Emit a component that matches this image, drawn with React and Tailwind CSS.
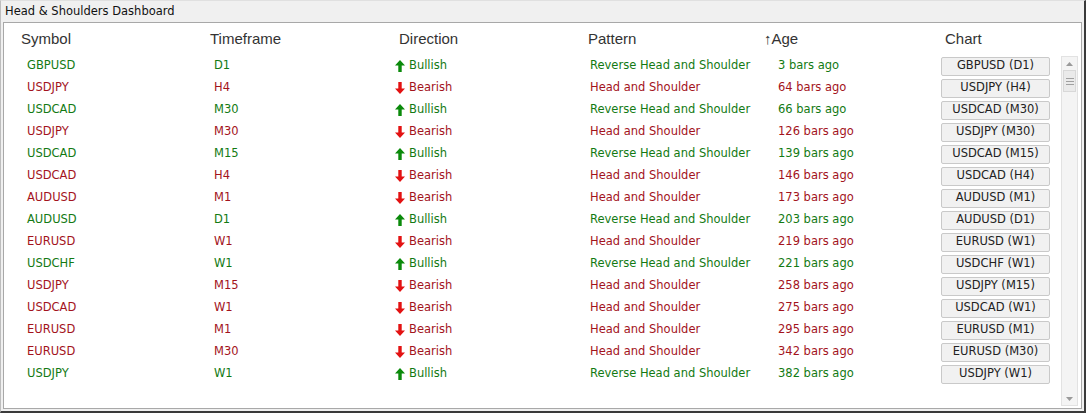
import React from 'react';

const rows = [
  ['GBPUSD', 'D1', 'up', 3],
  ['USDJPY', 'H4', 'down', 64],
  ['USDCAD', 'M30', 'up', 66],
  ['USDJPY', 'M30', 'down', 126],
  ['USDCAD', 'M15', 'up', 139],
  ['USDCAD', 'H4', 'down', 146],
  ['AUDUSD', 'M1', 'down', 173],
  ['AUDUSD', 'D1', 'up', 203],
  ['EURUSD', 'W1', 'down', 219],
  ['USDCHF', 'W1', 'up', 221],
  ['USDJPY', 'M15', 'down', 258],
  ['USDCAD', 'W1', 'down', 275],
  ['EURUSD', 'M1', 'down', 295],
  ['EURUSD', 'M30', 'down', 342],
  ['USDJPY', 'W1', 'up', 382],
];

const Arrow = ({ up }) => (
  <svg width="10" height="12" viewBox="0 0 10 12" className="shrink-0">
    {up ? (
      <path d="M5 0 L10 5.5 L6.7 5.5 L6.7 12 L3.3 12 L3.3 5.5 L0 5.5 Z" fill="#0b8a0b" />
    ) : (
      <path d="M5 12 L10 6.5 L6.7 6.5 L6.7 0 L3.3 0 L3.3 6.5 L0 6.5 Z" fill="#e31212" />
    )}
  </svg>
);

const Row = ({ sym, tf, dir, age }) => {
  const up = dir === 'up';
  const color = up ? 'text-[#137a13]' : 'text-[#a3131c]';
  return (
    <div className={`flex h-[22px] items-center pl-[23px] ${color}`}>
      <div className="w-[187px]">{sym}</div>
      <div className="w-[181px]">{tf}</div>
      <div className="flex w-[195px] items-center gap-[4px]">
        <Arrow up={up} />
        <span>{up ? 'Bullish' : 'Bearish'}</span>
      </div>
      <div className="w-[188px]">{up ? 'Reverse Head and Shoulder' : 'Head and Shoulder'}</div>
      <div className="w-[163px]">{age} bars ago</div>
      <div className="flex h-[19px] w-[109px] items-center justify-center rounded-[2px] border border-[#c9c9c9] bg-[#f1f1f1] text-[#222]">
        {sym} ({tf})
      </div>
    </div>
  );
}

export default function App() {
  return (
    <div className="h-[413px] w-[1086px] border-r-2 border-b-2 border-r-[#3a3a3a] border-b-[#3a3a3a] border-l border-t border-l-[#bdbdbd] border-t-[#e0e0e0] bg-[#f0f0f0] font-['DejaVu_Sans',sans-serif] text-[11.5px]">
      <div className="flex h-[21px] items-center pl-[4px] text-[#111]">Head &amp; Shoulders Dashboard</div>
      <div className="mx-[2px] flex h-[387px] flex-col border border-[#a8a8a8] bg-white pt-[1px]">
        <div className="flex h-[31px] items-center pl-[17px] font-['Liberation_Sans',sans-serif] text-[15px] text-[#333]">
          <div className="w-[189px]">Symbol</div>
          <div className="w-[189px]">Timeframe</div>
          <div className="w-[189px]">Direction</div>
          <div className="w-[176px]">Pattern</div>
          <div className="w-[181px]">↑Age</div>
          <div>Chart</div>
        </div>
        <div className="flex flex-1">
          <div className="flex-1">
            {rows.map((r, i) => (
              <Row key={i} sym={r[0]} tf={r[1]} dir={r[2]} age={r[3]} />
            ))}
          </div>
          <div className="mr-[3px] mt-[1px] mb-[2px] flex w-[17px] flex-col border border-[#e2e2e2] bg-[#f4f4f4]">
            <div className="flex h-[13px] items-center justify-center">
              <svg width="7" height="4" viewBox="0 0 7 4"><path d="M3.5 0 L7 4 L0 4 Z" fill="#9a9a9a" /></svg>
            </div>
            <div className="mx-[1px] flex h-[22px] flex-col items-center justify-center gap-[2px] border border-[#d8d8d8] bg-[#eaeaea]">
              <div className="h-[1px] w-[8px] bg-[#a0a0a0]" />
              <div className="h-[1px] w-[8px] bg-[#a0a0a0]" />
              <div className="h-[1px] w-[8px] bg-[#a0a0a0]" />
            </div>
            <div className="flex-1" />
            <div className="flex h-[13px] items-center justify-center">
              <svg width="7" height="4" viewBox="0 0 7 4"><path d="M0 0 L7 0 L3.5 4 Z" fill="#9a9a9a" /></svg>
            </div>
          </div>
        </div>
      </div>
    </div>
  );
}
